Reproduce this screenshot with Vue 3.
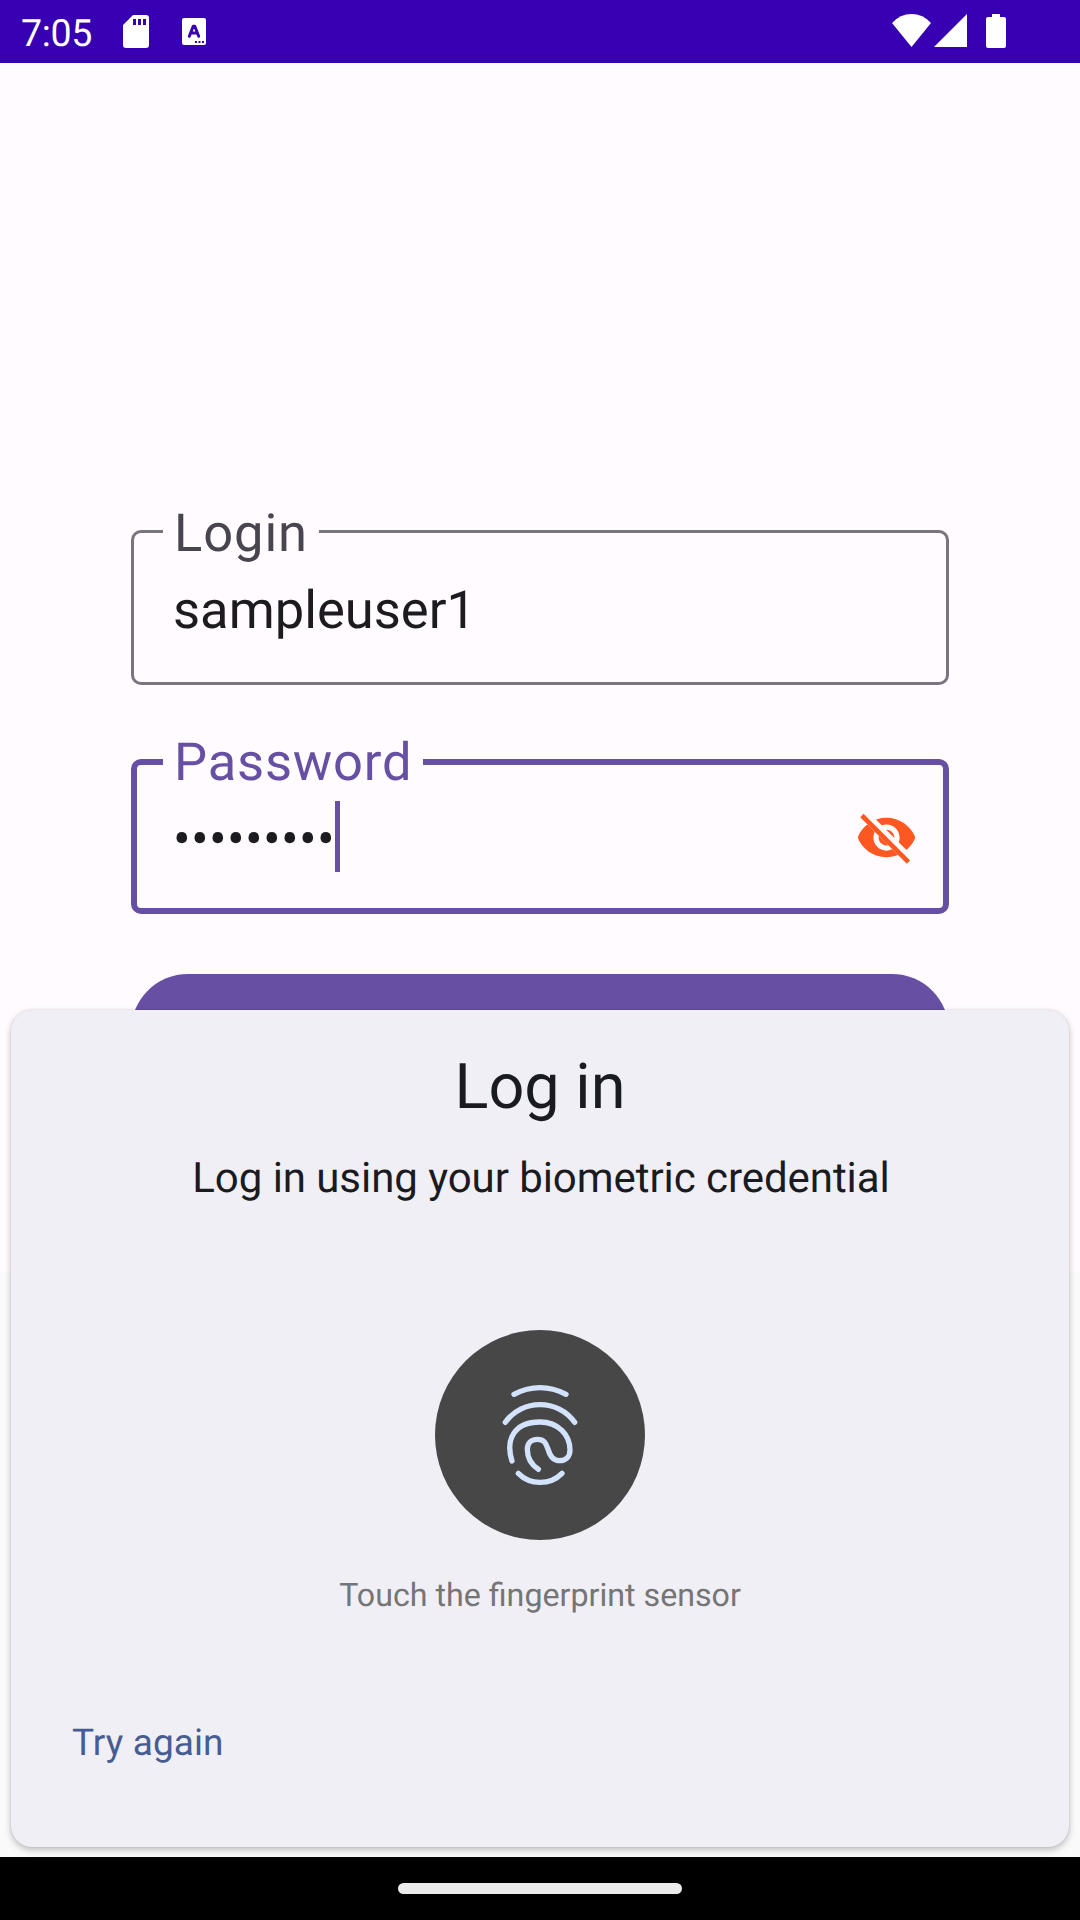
<script setup>
const login = 'sampleuser1'
const passwordMask = '•'.repeat(9)
</script>

<template>
  <div class="screen">
    <header class="status">
      <span class="time">7:05</span>
      <svg class="sd" width="26" height="33" viewBox="0 0 26 33">
        <path fill="#fff" fill-rule="evenodd" d="M10 0H23Q26 0 26 3V30Q26 33 23 33H3Q0 33 0 30V10ZM10 4V10H13V4ZM15 4V10H18V4ZM20 4V10H23V4Z" />
      </svg>
      <svg class="lang" width="24" height="27" viewBox="0 0 24 27">
        <rect width="24" height="27" rx="2" fill="#fff" />
        <path d="M7.3 18.3 11.2 8.2H12.8L16.7 18.3M8.8 15H15.2" fill="none" stroke="#3700b3" stroke-width="2.9" stroke-linecap="round" stroke-linejoin="round" />
        <path d="M13 23h2v2h-2zM16.5 23h2v2h-2zM20 23h2v2h-2z" fill="#3700b3" />
      </svg>
      <span class="spacer"></span>
      <svg class="wifi" width="39" height="33" viewBox="0 0 39 33">
        <path fill="#fff" d="M0 9Q8 0 19.5 0T39 9L19.5 33Z" />
      </svg>
      <svg class="signal" width="33" height="33" viewBox="0 0 33 33">
        <path fill="#fff" d="M33 0V33H0Z" />
      </svg>
      <svg class="battery" width="20" height="34" viewBox="0 0 20 34">
        <path fill="#fff" d="M6 0H14V3H18Q20 3 20 5V32Q20 34 18 34H2Q0 34 0 32V5Q0 3 2 3H6Z" />
      </svg>
    </header>

    <main class="content">
      <div class="field">
        <label class="label label-login">Login</label>
        <span class="value">{{ login }}</span>
      </div>
      <div class="field focused">
        <label class="label label-password">Password</label>
        <span class="value dots">{{ passwordMask }}</span>
        <span class="caret"></span>
        <svg class="eye" width="63" height="63" viewBox="0 0 24 24">
          <defs>
            <clipPath id="eye-strike">
              <path d="M2 4.27 19.73 22 22.27 19.46 4.54 1.73V1H23V23H1V4.27Z" />
            </clipPath>
          </defs>
          <path clip-path="url(#eye-strike)" fill="#ff5722" d="M12 4.5C7 4.5 2.73 7.61 1 12c1.73 4.39 6 7.5 11 7.5s9.27-3.11 11-7.5c-1.73-4.39-6-7.5-11-7.5zM12 17c-2.76 0-5-2.24-5-5s2.24-5 5-5 5 2.24 5 5-2.24 5-5 5zM12 9c-1.66 0-3 1.34-3 3s1.34 3 3 3 3-1.34 3-3-1.34-3-3-3z" />
          <path d="M3.27 4.27 19.74 20.74" stroke="#ff5722" stroke-width="1.8" stroke-linecap="square" />
        </svg>
      </div>
      <div class="submit"></div>
    </main>

    <section class="sheet">
      <h1 class="title">Log in</h1>
      <p class="subtitle">Log in using your biometric credential</p>
      <div class="sensor">
        <svg width="120" height="150" viewBox="0 0 360 450" fill="none" stroke="#d3e3fd" stroke-width="16" stroke-linecap="round" stroke-linejoin="round">
          <path d="M102 103Q180 63 258 103" />
          <path d="M76 187C125 116 235 116 284 187" />
          <path d="M96 303C76 240 101 186 180 186C235 186 270 225 270 270C270 290 257 302 239 302C222 302 211 291 205 270C197 248 193 238 172 238C153 238 142 250 142 268C142 295 155 315 175 328" />
          <path d="M115 340C150 376 211 376 246 340" />
        </svg>
      </div>
      <p class="hint">Touch the fingerprint sensor</p>
      <div class="actions"><span class="retry">Try again</span></div>
    </section>

    <footer class="nav"><span class="pill"></span></footer>
  </div>
</template>

<style>
body {
  margin: 0;
}
</style>

<style scoped>
.screen {
  position: relative;
  display: flex;
  flex-direction: column;
  width: 1080px;
  height: 1920px;
  overflow: hidden;
  background: #fafafa;
  font-family: Roboto, "Noto Sans", sans-serif;
  text-rendering: geometricPrecision;
}
.status {
  display: flex;
  align-items: flex-start;
  box-sizing: border-box;
  height: 63px;
  padding: 0 74px 0 21px;
  background: #3700b3;
}
.status svg {
  display: block;
  flex: none;
}
.time {
  width: 102px;
  color: #fff;
  font-size: 37.5px;
  line-height: 68px;
  letter-spacing: -0.3px;
}
.sd {
  margin-top: 15px;
}
.lang {
  margin: 18px 0 0 33px;
}
.spacer {
  flex: 1;
}
.wifi {
  margin-top: 14px;
}
.signal {
  margin: 14px 0 0 3px;
}
.battery {
  margin: 14px 0 0 19px;
}
.content {
  display: flex;
  flex-direction: column;
  box-sizing: border-box;
  height: 1209px;
  padding: 467px 131px 0;
  background: #fffbff;
}
.field {
  position: relative;
  display: flex;
  align-items: flex-start;
  box-sizing: border-box;
  height: 155px;
  padding: 44px 28px 0 39px;
  border: 3px solid #79747e;
  border-radius: 10px;
}
.focused {
  margin-top: 74px;
  padding: 36px 25px 0 36px;
  border: 6px solid #6750a4;
}
.label {
  position: absolute;
  top: -31px;
  left: 29px;
  box-sizing: border-box;
  width: 156px;
  padding-left: 11px;
  background: #fffbff;
  color: #49454f;
  font-size: 52.5px;
  line-height: 62px;
  letter-spacing: 0.9px;
  white-space: nowrap;
}
.label-password {
  top: -34px;
  left: 26px;
  width: 260px;
  color: #6750a4;
  letter-spacing: 0.8px;
}
.value {
  color: #1c1b1f;
  font-size: 52.5px;
  line-height: 67px;
}
.dots {
  width: 162px;
  letter-spacing: 0.3px;
  line-height: 77px;
}
.caret {
  width: 5px;
  height: 71px;
  background: #6750a4;
}
.eye {
  display: block;
  margin: 5px 0 0 auto;
}
.submit {
  height: 114px;
  margin-top: 60px;
  border-radius: 57px;
  background: #6750a4;
}
.sheet {
  position: absolute;
  top: 1010px;
  left: 11px;
  right: 11px;
  display: flex;
  flex-direction: column;
  align-items: center;
  box-sizing: border-box;
  height: 837px;
  padding-top: 41px;
  border-radius: 21px;
  background: #f0eff6;
  box-shadow: 0 3px 7px rgba(0, 0, 0, 0.24), 0 0 2px rgba(0, 0, 0, 0.14);
}
.title,
.subtitle,
.hint {
  margin: 0;
  font-weight: 400;
}
.title {
  color: #1a1b20;
  font-size: 63px;
  line-height: 74px;
}
.subtitle {
  margin-top: 29px;
  padding-left: 2px;
  color: #1a1b20;
  font-size: 42px;
  line-height: 50px;
  letter-spacing: -0.06px;
}
.sensor {
  display: flex;
  align-items: center;
  justify-content: center;
  width: 210px;
  height: 210px;
  margin-top: 126px;
  border-radius: 50%;
  background: #474747;
}
.hint {
  margin-top: 36px;
  color: #757575;
  font-size: 32.2px;
  line-height: 38px;
}
.actions {
  align-self: stretch;
  margin-top: 108px;
  padding-left: 61px;
}
.retry {
  display: block;
  color: #475d92;
  font-size: 37px;
  line-height: 44px;
  letter-spacing: 0.1px;
}
.nav {
  display: flex;
  justify-content: center;
  align-items: flex-start;
  box-sizing: border-box;
  height: 63px;
  margin-top: auto;
  padding-top: 26px;
  background: #000;
}
.pill {
  width: 284px;
  height: 11px;
  border-radius: 6px;
  background: #ebebeb;
}
</style>
